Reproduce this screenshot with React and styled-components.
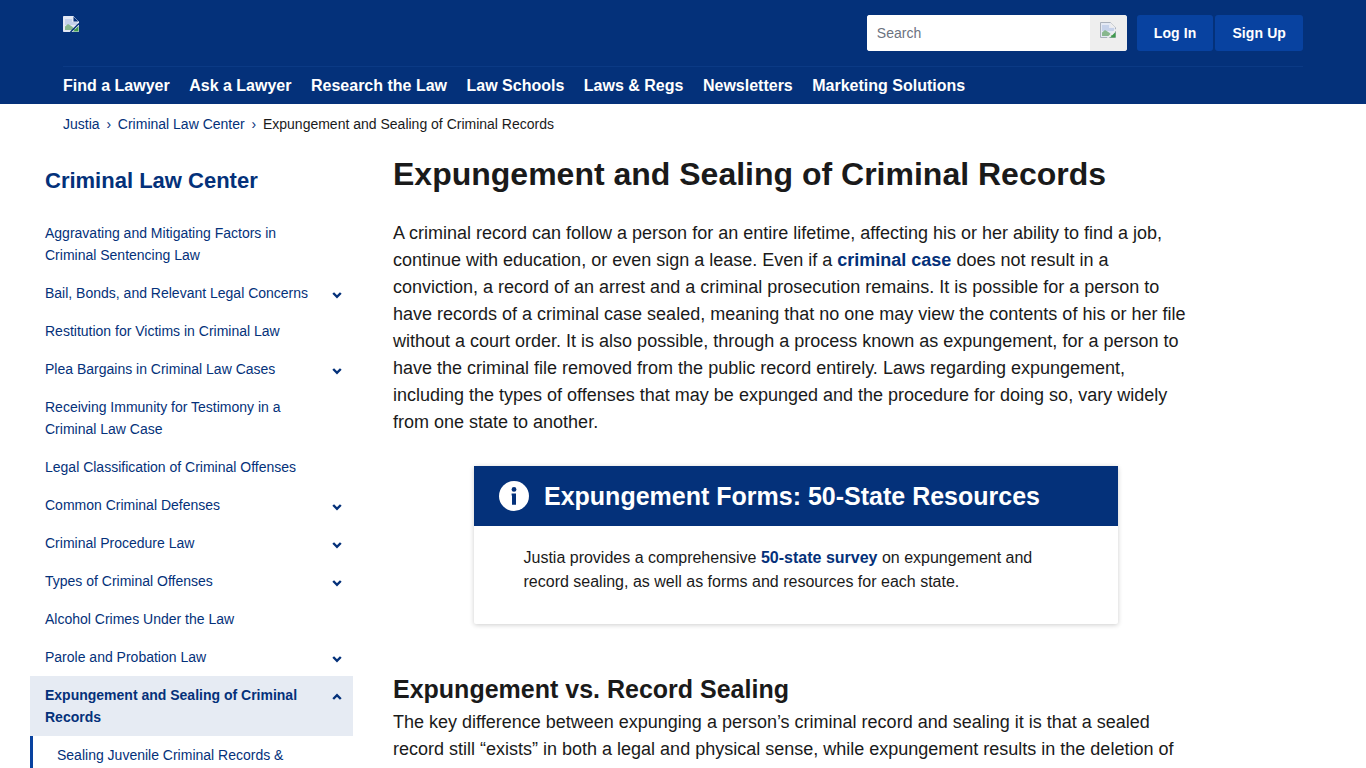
import { createGlobalStyle, default as styled } from "styled-components";

const NAV_ITEMS = [
  "Find a Lawyer",
  "Ask a Lawyer",
  "Research the Law",
  "Law Schools",
  "Laws & Regs",
  "Newsletters",
  "Marketing Solutions",
];

const SIDE_ITEMS = [
  { label: "Aggravating and Mitigating Factors in Criminal Sentencing Law" },
  { label: "Bail, Bonds, and Relevant Legal Concerns", arrow: "down" },
  { label: "Restitution for Victims in Criminal Law" },
  { label: "Plea Bargains in Criminal Law Cases", arrow: "down" },
  { label: "Receiving Immunity for Testimony in a Criminal Law Case" },
  { label: "Legal Classification of Criminal Offenses" },
  { label: "Common Criminal Defenses", arrow: "down" },
  { label: "Criminal Procedure Law", arrow: "down" },
  { label: "Types of Criminal Offenses", arrow: "down" },
  { label: "Alcohol Crimes Under the Law" },
  { label: "Parole and Probation Law", arrow: "down" },
  { label: "Expungement and Sealing of Criminal Records", arrow: "up", active: true },
];

// the browser's missing-image glyph, tear colour follows whatever is behind it
const BrokenImage = ({ tear, edge }) => (
  <svg width="16" height="16" viewBox="0 0 16 16">
    <path d="M0.5 0.5H10.5L15.5 5.5V15.5H0.5Z" fill="#e4e9f4" stroke={edge} />
    <path d="M10.5 0.5V5.5H15.5" fill={tear} />
    <path d="M2 3H9V6H14V9H2Z" fill="#c6d2ea" />
    <path d="M2 14V10.5L5 8L9 10.5L13 14Z" fill="#88b78e" />
    <path d="M10 15.5L15.5 10V15.5Z" fill="#3f9a4c" />
    <path d="M7.5 16L16 7.5" stroke={tear} strokeWidth="1.5" />
  </svg>
);

const Chevron = ({ up }) => (
  <svg width="10" height="8" viewBox="0 0 10 8">
    <path
      d={up ? "M1.2 6L5 2.2L8.8 6" : "M1.2 2L5 5.8L8.8 2"}
      fill="none"
      stroke="#04317a"
      strokeWidth="2.4"
    />
  </svg>
);

const App = () => {
  return (
    <Page>
      <GlobalStyle />
      <Header>
        <HeaderTop>
          <LogoSlot>
            <BrokenImage tear="#04317a" edge="#e4e9f4" />
          </LogoSlot>
          <HeaderActions>
            <SearchBox>
              <SearchInput placeholder="Search" />
              <SearchButton>
                <BrokenImage tear="#eeeeee" edge="#a9b0bb" />
              </SearchButton>
            </SearchBox>
            <AuthButton>Log In</AuthButton>
            <AuthButton>Sign Up</AuthButton>
          </HeaderActions>
        </HeaderTop>
        <NavBar>
          {NAV_ITEMS.map((item) => (
            <NavLink key={item}>{item}</NavLink>
          ))}
        </NavBar>
      </Header>

      <Breadcrumbs>
        <CrumbLink>Justia</CrumbLink>
        <CrumbSep>›</CrumbSep>
        <CrumbLink>Criminal Law Center</CrumbLink>
        <CrumbSep>›</CrumbSep>
        <span>Expungement and Sealing of Criminal Records</span>
      </Breadcrumbs>

      <Columns>
        <Sidebar>
          <SideTitle>Criminal Law Center</SideTitle>
          <SideList>
            {SIDE_ITEMS.map((item) => (
              <SideItem key={item.label} $active={item.active}>
                <SideLabel $active={item.active}>{item.label}</SideLabel>
                {item.arrow && (
                  <SideArrow>
                    <Chevron up={item.arrow === "up"} />
                  </SideArrow>
                )}
              </SideItem>
            ))}
          </SideList>
          <SubItem>Sealing Juvenile Criminal Records &amp; Expungement</SubItem>
        </Sidebar>

        <Main>
          <Title>Expungement and Sealing of Criminal Records</Title>
          <Intro>
            A criminal record can follow a person for an entire lifetime, affecting his or her
            ability to find a job, continue with education, or even sign a lease. Even if a{" "}
            <TextLink>criminal case</TextLink> does not result in a conviction, a record of an
            arrest and a criminal prosecution remains. It is possible for a person to have records
            of a criminal case sealed, meaning that no one may view the contents of his or her file
            without a court order. It is also possible, through a process known as expungement, for
            a person to have the criminal file removed from the public record entirely. Laws
            regarding expungement, including the types of offenses that may be expunged and the
            procedure for doing so, vary widely from one state to another.
          </Intro>

          <Callout>
            <CalloutHead>
              <InfoIcon viewBox="0 0 30 30">
                <circle cx="15" cy="15" r="15" fill="#fff" />
                <circle cx="15" cy="8.4" r="2.4" fill="#04317a" />
                <path d="M12.6 12.6H17V23.8H13V14.4H12.6Z" fill="#04317a" />
              </InfoIcon>
              <CalloutTitle>Expungement Forms: 50-State Resources</CalloutTitle>
            </CalloutHead>
            <CalloutBody>
              Justia provides a comprehensive <TextLink>50-state survey</TextLink> on expungement
              and record sealing, as well as forms and resources for each state.
            </CalloutBody>
          </Callout>

          <SectionTitle>Expungement vs. Record Sealing</SectionTitle>
          <Paragraph>
            The key difference between expunging a person’s criminal record and sealing it is that
            a sealed record still “exists” in both a legal and physical sense, while expungement
            results in the deletion of the record from public view.
          </Paragraph>
        </Main>
      </Columns>
    </Page>
  );
};

const GlobalStyle = createGlobalStyle`
  html, body {
    margin: 0;
    padding: 0;
    background: #fff;
    overflow: hidden;
  }

  body {
    font-family: "Liberation Sans", Arial, sans-serif;
    color: #1a1a1a;
  }
`;

const Page = styled.div`
  height: 768px;
  overflow: hidden;
`;

const Header = styled.header`
  background-color: #04317a;
  height: 104px;
  padding: 0 63px;
  box-sizing: border-box;
`;

const HeaderTop = styled.div`
  display: flex;
  justify-content: space-between;
  height: 66px;
  border-bottom: 1px solid #0b3a85;
  width: 1240px;
`;

const LogoSlot = styled.div`
  padding-top: 16px;
  line-height: 0;
`;

const HeaderActions = styled.div`
  display: flex;
  align-items: flex-start;
  gap: 2px;
  padding-top: 15px;
`;

const SearchBox = styled.div`
  display: flex;
  width: 260px;
  height: 36px;
  margin-right: 8px;
  background: #fff;
  border-radius: 3px;
  overflow: hidden;
`;

const SearchInput = styled.input`
  flex: 1;
  min-width: 0;
  border: 0;
  padding: 0 10px;
  font-family: "Liberation Sans", Arial, sans-serif;
  font-size: 14px;
  outline: none;

  &::placeholder {
    color: #6c7280;
    opacity: 1;
  }
`;

const SearchButton = styled.div`
  width: 37px;
  display: flex;
  justify-content: center;
  padding-top: 7px;
  box-sizing: border-box;
  background: #eeeeee;
`;

const AuthButton = styled.button`
  height: 36px;
  padding: 0 17px;
  border: 0;
  border-radius: 3px;
  background: #0842a0;
  color: #fff;
  font-family: "Liberation Sans", Arial, sans-serif;
  font-weight: 700;
  font-size: 14px;
  letter-spacing: 0.1px;
`;

const NavBar = styled.nav`
  display: flex;
  gap: 19.5px;
  padding-top: 9px;
`;

const NavLink = styled.a`
  color: #fff;
  font-weight: 700;
  font-size: 16px;
  line-height: 20px;
`;

const Breadcrumbs = styled.div`
  display: flex;
  padding: 12px 63px 0;
  height: 16px;
  font-size: 14px;
  line-height: 16px;
`;

const CrumbLink = styled.a`
  color: #04317a;
`;

const CrumbSep = styled.span`
  margin: 0 6.8px;
  color: #04317a;
`;

const Columns = styled.div`
  display: flex;
  padding-top: 24px;
`;

const Sidebar = styled.aside`
  width: 323px;
  margin-left: 30px;
  flex-shrink: 0;
`;

const SideTitle = styled.h2`
  margin: 12px 0 0 15px;
  color: #04317a;
  font-size: 22px;
  line-height: 26px;
  font-weight: 700;
`;

const SideList = styled.ul`
  list-style: none;
  margin: 20px 0 0;
  padding: 0;
`;

const SideItem = styled.li`
  display: flex;
  justify-content: space-between;
  padding: 8px 11px 8px 15px;
  background: ${(p) => (p.$active ? "#e6ebf3" : "transparent")};
`;

const SideLabel = styled.a`
  width: 270px;
  color: #04317a;
  font-size: 14px;
  line-height: 22px;
  font-weight: ${(p) => (p.$active ? 700 : 400)};
`;

const SideArrow = styled.span`
  display: flex;
  align-items: center;
  height: 22px;
  padding-top: 4px;
  box-sizing: border-box;
`;

const SubItem = styled.a`
  display: block;
  border-left: 3px solid #0842a0;
  padding: 8px 50px 8px 24px;
  color: #04317a;
  font-size: 14px;
  line-height: 22px;
`;

const Main = styled.main`
  width: 800px;
  margin-left: 40px;
`;

const Title = styled.h1`
  margin: 0;
  font-size: 32px;
  line-height: 36px;
  font-weight: 700;
`;

const Paragraph = styled.p`
  margin: 5px 0 0;
  font-size: 18px;
  line-height: 27px;
`;

const Intro = styled(Paragraph)`
  margin-top: 28px;
`;

const TextLink = styled.a`
  color: #04317a;
  font-weight: 700;
`;

const Callout = styled.section`
  width: 644px;
  margin: 30px 0 0 81px;
  background: #fff;
  border-radius: 2px;
  box-shadow: 0 1px 5px rgba(0, 0, 0, 0.2);
`;

const CalloutHead = styled.div`
  display: flex;
  align-items: center;
  gap: 15px;
  height: 60px;
  padding-left: 25px;
  background: #04317a;
`;

const InfoIcon = styled.svg`
  width: 30px;
  height: 30px;
`;

const CalloutTitle = styled.h3`
  margin: 0;
  color: #fff;
  font-size: 25px;
  line-height: 30px;
  font-weight: 700;
`;

const CalloutBody = styled.p`
  margin: 0;
  padding: 20px 70px 30px 49.5px;
  font-size: 16px;
  line-height: 24px;
`;

const SectionTitle = styled.h2`
  margin: 50px 0 0;
  font-size: 25px;
  line-height: 30px;
  font-weight: 700;
`;

export default App;
